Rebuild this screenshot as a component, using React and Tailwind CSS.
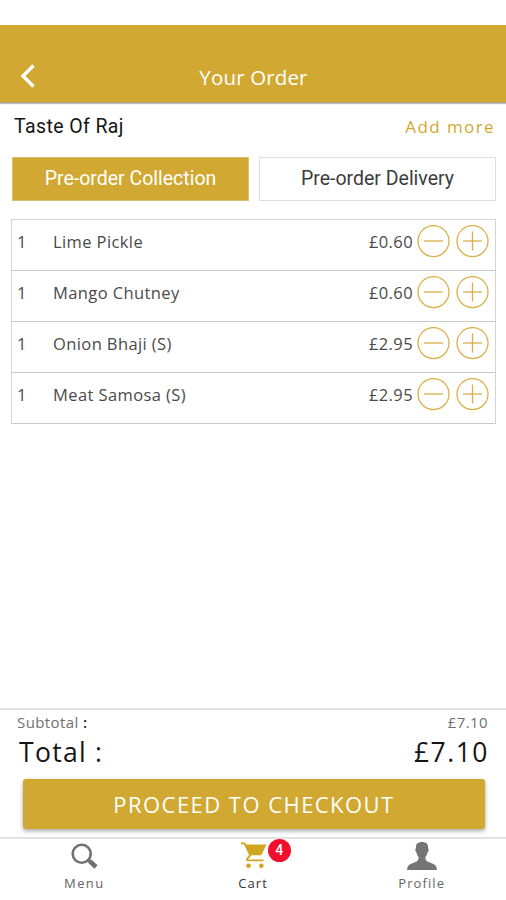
const items = [
  { name: 'Lime Pickle', price: '£0.60' },
  { name: 'Mango Chutney', price: '£0.60' },
  { name: 'Onion Bhaji (S)', price: '£2.95' },
  { name: 'Meat Samosa (S)', price: '£2.95' },
];

function RoundButton({ plus }) {
  return (
    <button className="block" aria-label={plus ? 'Increase' : 'Decrease'}>
      <svg width="33" height="33" viewBox="0 0 33 33" fill="none" stroke="#d9b04a" strokeWidth="1.3">
        <circle cx="16.5" cy="16.1" r="15.5" />
        <path d="M7 16H26" />
        {plus && <path d="M16.500 6.500V25.500" />}
      </svg>
    </button>
  );
}

function Header() {
  return (
    <header className="mt-[25px] flex h-[78px] shrink-0 items-end border-b border-[#b9a678] bg-[#d1a932] text-white shadow-[0_1px_1px_rgba(70,70,110,0.35)]">
      <button className="mb-[13px] ml-[18px] w-[18px]" aria-label="Back">
        <svg width="18" height="26" viewBox="0 0 18 26" fill="none" stroke="currentColor" strokeWidth="3.4">
          <path d="M15.500 2.500L5 13L15.500 23.500" />
        </svg>
      </button>
      <h1 className="mr-[35px] mb-[11px] flex-1 text-center text-[20.5px] leading-[28px] tracking-[0.15px]">Your Order</h1>
    </header>
  );
}

function Item({ item }) {
  return (
    <li className="flex h-[51px] items-start border-b border-[#c9c9c9] pr-[6px] pl-[5px] text-[16.5px] text-[#4a4a4a]">
      <span className="mt-[10px] w-[36px] leading-6">1</span>
      <span className="mt-[10px] flex-1 leading-6 tracking-[0.4px]">{item.name}</span>
      <span className="mt-[10px] mr-[4px] leading-6 tracking-[0.4px]">{item.price}</span>
      <span className="mt-[5px] flex gap-[6px]">
        <RoundButton />
        <RoundButton plus />
      </span>
    </li>
  );
}

export default function App() {
  return (
    <div className="flex h-[900px] w-[506px] flex-col overflow-hidden bg-white font-['Open_Sans','Noto_Sans',sans-serif]">
      <Header />
      <div className="mt-[10px] flex h-[28px] items-center justify-between pr-[11px] pl-[14px]">
        <h2 className="font-[Roboto,sans-serif] text-[19.5px] tracking-[0.4px] text-[#161616]">Taste Of Raj</h2>
        <button className="text-[17px] font-medium tracking-[1.4px] text-[#d1a932]">Add more</button>
      </div>
      <div className="mt-[16px] flex gap-[10px] pr-[10px] pl-[12px] font-[Roboto,sans-serif] text-[19.5px]">
        <button className="h-[44px] w-[237px] border border-[#dbc071] bg-[#d1a932] text-white">Pre-order Collection</button>
        <button className="h-[44px] w-[237px] border border-[#dedede] bg-white text-[#3d3d3d]">Pre-order Delivery</button>
      </div>
      <ul className="mt-[18px] mr-[10px] ml-[11px] border border-b-0 border-[#d4d4d4]">
        {items.map((item) => (
          <Item key={item.name} item={item} />
        ))}
      </ul>
      <section className="mt-auto h-[129px] border-t-2 border-[#e2e2e2]">
        <div className="flex h-[24px] items-center justify-between pr-[18px] pl-[17px] text-[15px] text-[#707070]">
          <span className="tracking-[0.4px]">Subtotal <b className="font-semibold text-[#222]">:</b></span>
          <span className="tracking-[0.4px]">£7.10</span>
        </div>
        <div className="flex h-[38px] items-center justify-between pr-[17px] pl-[19px] text-[26.5px] text-[#151515]">
          <span className="tracking-[1.3px]">Total :</span>
          <span className="tracking-[1.5px]">£7.10</span>
        </div>
        <button className="mt-[7px] ml-[23px] h-[50px] w-[462px] rounded-[3px] bg-[#d1a932] text-[22px] tracking-[1.45px] text-white shadow-[0_2px_4px_rgba(0,0,0,0.35)]">
          PROCEED TO CHECKOUT
        </button>
      </section>
      <nav className="flex h-[63px] shrink-0 border-t-2 border-[#e2e2e2] text-[13px] text-[#666]">
        <a className="flex flex-1 flex-col items-center">
          <svg className="mt-[3px]" width="28" height="28" viewBox="0 0 28 28" fill="none" stroke="#707070">
            <circle cx="11.7" cy="11.8" r="9" strokeWidth="2.6" />
            <path d="M18 17.6L20 19.5" strokeWidth="2.8" />
            <path d="M19.500 18.800L26 25" strokeWidth="4.6" />
          </svg>
          <span className="mt-[3px] leading-5 tracking-[1.4px]">Menu</span>
        </a>
        <a className="relative flex flex-1 flex-col items-center text-[#333]">
          <svg className="mt-[2px] ml-[1px]" width="28" height="28" viewBox="0 0 28 28" fill="#d0a51f">
            <path d="M5 3.600H26.500L21.300 14.200H10Z" />
            <path d="M1 2.400H4.600L10.200 14.200L7.300 17.800Q6.400 19.400 8.400 19.400H23.500" fill="none" stroke="#d0a51f" strokeWidth="1.9" />
            <circle cx="8.500" cy="24.800" r="2.300" />
            <circle cx="21.300" cy="24.800" r="2.300" />
          </svg>
          <span className="absolute top-0 left-[99px] flex size-[23px] items-center justify-center rounded-full bg-[#f00f2d] font-[Roboto,sans-serif] text-[14px] font-medium text-white">4</span>
          <span className="mt-[4px] leading-5 tracking-[1.1px]">Cart</span>
        </a>
        <a className="flex flex-1 flex-col items-center">
          <svg className="mt-[2px]" width="32" height="30" viewBox="0 0 32 30" fill="#757575">
            <path d="M16 1c4.500 0 6.400 2.100 6.100 6.200 1 .4.7 3.500-.6 4.300-.4 2.200-1.300 3.600-2.100 4.600 0 2 .2 3.500 2 4.300l5.500 2.300c2.800 1.200 3.800 2.800 4.100 6.300H1c.3-3.500 1.300-5.100 4.100-6.300l5.500-2.300c1.800-.8 2-2.300 2-4.300-.8-1-1.700-2.400-2.100-4.600-1.300-.8-1.600-3.900-.6-4.300C9.600 3.100 11.500 1 16 1Z" />
          </svg>
          <span className="mt-[2px] leading-5 tracking-[1.1px]">Profile</span>
        </a>
      </nav>
    </div>
  );
}
